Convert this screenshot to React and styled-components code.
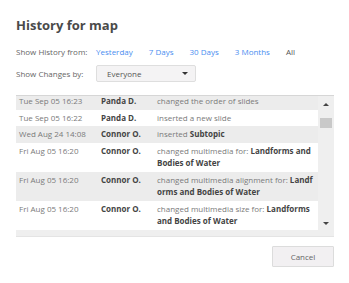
import React from 'react';
import styled, { createGlobalStyle } from 'styled-components';

const GlobalStyle = createGlobalStyle`
  body {
    margin: 0;
    background: #ffffff;
    font-family: "Open Sans", "Noto Sans", sans-serif;
    color: #666;
  }
`;

const Dialog = styled.div`
  width: 349px;
  height: 283px;
  box-sizing: border-box;
  padding: 17px 15px 0 16px;
  background: #fff;
`;

const Title = styled.h2`
  margin: 0;
  font-size: 13px;
  line-height: 16px;
  font-weight: 700;
  color: #4a4a4a;
`;

const FilterRow = styled.div`
  display: flex;
  align-items: center;
  font-size: 8px;
  height: 18px;
  margin-top: ${props => props.top}px;
`;

const Label = styled.span`
  color: #666;
  width: 80px;
  flex-shrink: 0;
`;

const RangeLink = styled.a`
  color: ${props => (props.active ? '#555' : '#4a8ef0')};
  text-decoration: none;
  margin-right: 16px;
  cursor: pointer;
`;

const Select = styled.div`
  display: flex;
  align-items: center;
  justify-content: space-between;
  box-sizing: border-box;
  width: 100px;
  height: 17px;
  padding: 0 7px 0 10px;
  background: #f4f3f4;
  border: 1px solid #dedede;
  border-radius: 2px;
  color: #555;
`;

const Caret = styled.span`
  width: 0;
  height: 0;
  border-left: 3px solid transparent;
  border-right: 3px solid transparent;
  border-top: 3px solid #333;
`;

const Table = styled.div`
  display: flex;
  margin-top: 13px;
  height: 140px;
  background: #efefef;
  border-top: 1px solid #d6d6d6;
  border-bottom: 1px solid #e4e4e4;
`;

const List = styled.div`
  flex: 1;
  overflow: hidden;
`;

const Rows = styled.div`
  margin-top: -3px;
`;

const Row = styled.div`
  display: grid;
  grid-template-columns: 82px 56px 160px;
  padding: 2px 0 2px 3px;
  font-size: 8px;
  line-height: 12.5px;
  background: ${props => (props.shaded ? '#ececec' : '#ffffff')};
`;

const DateCell = styled.span`
  color: #7a7a7a;
`;

const UserCell = styled.span`
  color: #444;
  font-weight: 700;
`;

const ActionCell = styled.span`
  color: #7a7a7a;
  word-break: ${props => (props.breakAll ? 'break-all' : 'normal')};

  b {
    color: #444;
    font-weight: 700;
  }
`;

const Scrollbar = styled.div`
  width: 16px;
  display: flex;
  flex-direction: column;
  align-items: center;
  padding-top: 7px;
`;

const Arrow = styled.span`
  width: 0;
  height: 0;
  border-left: 3px solid transparent;
  border-right: 3px solid transparent;
  ${props => (props.down ? 'border-top: 3px solid #444;' : 'border-bottom: 3px solid #444;')}
  margin-top: ${props => props.gap || 0}px;
`;

const Thumb = styled.div`
  width: 12px;
  height: 10px;
  margin-top: 12px;
  background: #c9c9c9;
`;

const Footer = styled.div`
  display: flex;
  justify-content: flex-end;
  margin-top: 9px;
`;

const Button = styled.button`
  width: 62px;
  height: 21px;
  background: #f2f0f2;
  border: 1px solid #dcdcdc;
  border-radius: 1px;
  color: #666;
  font-family: inherit;
  font-size: 8px;
  cursor: pointer;
`;

const history = [
  { date: 'Tue Sep 05 16:23', user: 'Panda D.', action: 'changed the order of slides' },
  { date: 'Tue Sep 05 16:22', user: 'Panda D.', action: 'inserted a new slide' },
  { date: 'Wed Aug 24 14:08', user: 'Connor O.', action: 'inserted ', target: 'Subtopic' },
  { date: 'Fri Aug 05 16:20', user: 'Connor O.', action: 'changed multimedia for: ', target: 'Landforms and Bodies of Water' },
  { date: 'Fri Aug 05 16:20', user: 'Connor O.', action: 'changed multimedia alignment for: ', target: 'Landforms and Bodies of Water', breakAll: true },
  { date: 'Fri Aug 05 16:20', user: 'Connor O.', action: 'changed multimedia size for: ', target: 'Landforms and Bodies of Water' },
];

const ranges = ['Yesterday', '7 Days', '30 Days', '3 Months', 'All'];

const App = () => (
  <>
    <GlobalStyle />
    <Dialog>
      <Title>History for map</Title>
      <FilterRow top={9}>
        <Label>Show History from:</Label>
        {ranges.map(r => (
          <RangeLink key={r} active={r === 'All'}>{r}</RangeLink>
        ))}
      </FilterRow>
      <FilterRow top={4}>
        <Label>Show Changes by:</Label>
        <Select>
          Everyone
          <Caret />
        </Select>
      </FilterRow>
      <Table>
        <List>
          <Rows>
            {history.map((h, i) => (
              <Row key={i} shaded={i % 2 === 0}>
                <DateCell>{h.date}</DateCell>
                <UserCell>{h.user}</UserCell>
                <ActionCell breakAll={h.breakAll}>
                  {h.action}
                  {h.target && <b>{h.target}</b>}
                </ActionCell>
              </Row>
            ))}
          </Rows>
        </List>
        <Scrollbar>
          <Arrow />
          <Thumb />
          <Arrow down gap={94} />
        </Scrollbar>
      </Table>
      <Footer>
        <Button>Cancel</Button>
      </Footer>
    </Dialog>
  </>
);

export default App;
